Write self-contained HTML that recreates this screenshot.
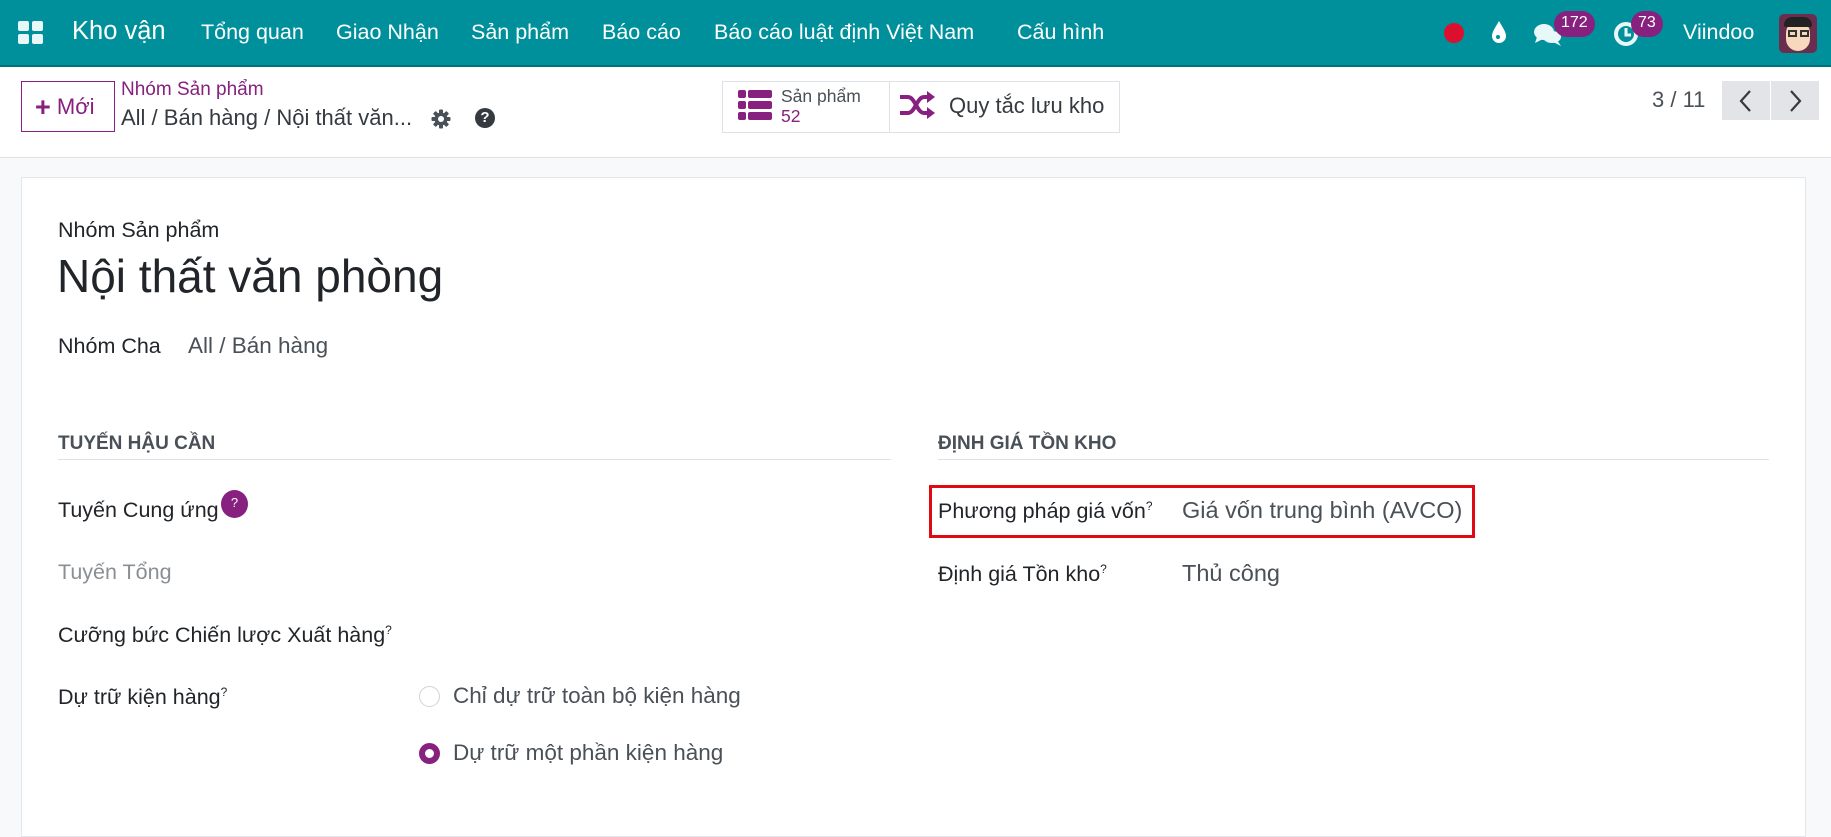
<!DOCTYPE html>
<html><head><meta charset="utf-8"><style>
*{margin:0;padding:0;box-sizing:border-box}
body{width:1831px;height:820px;overflow:hidden;background:#f8f9fa;font-family:"Liberation Sans","Noto Sans CJK SC",sans-serif;color:#212529;position:relative}
.a{position:absolute;white-space:nowrap;line-height:1}
.nav{position:absolute;left:0;top:0;width:1831px;height:67px;background:#00909b;border-bottom:2px solid #00707a}
.nav .a{color:#fff;font-size:21.5px;top:22px}
.cp{position:absolute;left:0;top:67px;width:1831px;height:91px;background:#fff;border-bottom:1px solid #dee2e6}
.card{position:absolute;left:21px;top:177px;width:1785px;height:660px;background:#fff;border:1px solid #e3e6ea}
.lbl{font-size:21.5px;color:#212529}
.val{font-size:22.5px;color:#495057}
.hd{font-size:19px;font-weight:bold;color:#495057}
sup{font-size:12px}
</style></head><body>
<div class="nav">
  <svg class="a" style="left:18px;top:21px" width="26" height="24" viewBox="0 0 26 24"><rect x="0" y="0" width="11" height="10" rx="2" fill="#e8f7f8"/><rect x="14" y="0" width="11" height="10" rx="2" fill="#e8f7f8"/><rect x="0" y="13" width="11" height="10" rx="2" fill="#e8f7f8"/><rect x="14" y="13" width="11" height="10" rx="2" fill="#e8f7f8"/></svg>
  <div class="a" style="left:72px;top:19px;font-size:25.5px">Kho vận</div>
  <div class="a" style="left:201px">Tổng quan</div>
  <div class="a" style="left:336px">Giao Nhận</div>
  <div class="a" style="left:471px">Sản phẩm</div>
  <div class="a" style="left:602px">Báo cáo</div>
  <div class="a" style="left:714px">Báo cáo luật định Việt Nam</div>
  <div class="a" style="left:1017px">Cấu hình</div>
  <div class="a" style="left:1444px;top:23px;width:20px;height:20px;border-radius:50%;background:#dc0f2e"></div>
  <svg class="a" style="left:1490px;top:20px" width="18" height="24" viewBox="0 0 18 24"><path d="M9 1 C13 8 16 12 16 16 A7 7 0 0 1 2 16 C2 12 5 8 9 1Z" fill="#fff"/><circle cx="8" cy="17" r="2" fill="#00909b"/></svg>
  <svg class="a" style="left:1533px;top:22px" width="30" height="26" viewBox="0 0 30 26"><ellipse cx="11" cy="10" rx="10" ry="8" fill="#e8f7f8"/><path d="M4 15 L2 21 L10 17Z" fill="#e8f7f8"/><ellipse cx="19" cy="15" rx="9" ry="6" fill="#e8f7f8"/><path d="M24 18 L28 24 L20 20Z" fill="#e8f7f8"/></svg>
  <div class="a" style="left:1554px;top:11px;height:26px;padding:4px 7px;border-radius:13px;background:#87207f;font-size:16px">172</div>
  <svg class="a" style="left:1613px;top:20px" width="28" height="28" viewBox="0 0 28 28"><circle cx="13" cy="14" r="10" fill="none" stroke="#e8f7f8" stroke-width="4"/><path d="M13 8 V15 H18" stroke="#e8f7f8" stroke-width="3" fill="none"/></svg>
  <div class="a" style="left:1631px;top:11px;height:26px;padding:4px 7px;border-radius:13px;background:#87207f;font-size:16px">73</div>
  <div class="a" style="left:1683px">Viindoo</div>
  <div class="a" style="left:1779px;top:14px;width:38px;height:39px;border-radius:5px;background:#6b2d4e;overflow:hidden"><div style="position:absolute;left:7px;top:7px;width:24px;height:30px;border-radius:12px;background:#f7d8bd"></div><div style="position:absolute;left:5px;top:3px;width:28px;height:10px;border-radius:8px 8px 2px 2px;background:#222"></div><div style="position:absolute;left:9px;top:16px;width:9px;height:7px;border:2px solid #333"></div><div style="position:absolute;left:21px;top:16px;width:9px;height:7px;border:2px solid #333"></div></div>
</div>
<div class="cp">
  <div class="a" style="left:21px;top:14px;width:94px;height:51px;border:1px solid #87207f;color:#87207f;font-size:22px;line-height:49px;padding-left:13px"><b style="font-size:27px;vertical-align:-2px">+</b> Mới</div>
  <div class="a" style="left:121px;top:13px;font-size:19px;color:#87207f">Nhóm Sản phẩm</div>
  <div class="a" style="left:121px;top:40px;font-size:22px;color:#343a40">All / Bán hàng / Nội thất văn...</div>
  <svg class="a" style="left:431px;top:42px" width="20" height="20" viewBox="0 0 20 20"><g fill="#495057"><circle cx="10" cy="10" r="6.5"/><rect x="8" y="0.5" width="4" height="19" rx="1"/><rect x="0.5" y="8" width="19" height="4" rx="1"/><rect x="8" y="0.5" width="4" height="19" rx="1" transform="rotate(45 10 10)"/><rect x="8" y="0.5" width="4" height="19" rx="1" transform="rotate(-45 10 10)"/></g><circle cx="10" cy="10" r="3" fill="#fff"/></svg>
  <div class="a" style="left:475px;top:41px;width:20px;height:20px;border-radius:50%;background:#343a40;color:#fff;font-size:15px;font-weight:bold;text-align:center;line-height:20px">?</div>
  <div class="a" style="left:722px;top:14px;width:398px;height:52px;border:1px solid #dee2e6"></div>
  <div class="a" style="left:889px;top:14px;width:1px;height:52px;background:#dee2e6"></div>
  <svg class="a" style="left:738px;top:22px" width="35" height="33" viewBox="0 0 35 33"><g fill="#87207f"><rect x="0" y="1" width="8" height="8" rx="2"/><rect x="10" y="1" width="24" height="8" rx="2"/><rect x="0" y="12" width="8" height="8" rx="2"/><rect x="10" y="12" width="24" height="8" rx="2"/><rect x="0" y="23" width="8" height="8" rx="2"/><rect x="10" y="23" width="24" height="8" rx="2"/></g></svg>
  <div class="a" style="left:781px;top:21px;font-size:17.5px;color:#495057">Sản phẩm</div>
  <div class="a" style="left:781px;top:41px;font-size:17.5px;color:#87207f">52</div>
  <svg class="a" style="left:899px;top:24px" width="36" height="28" viewBox="0 0 36 28"><g fill="none" stroke="#87207f" stroke-width="4"><path d="M1 6 H9 C16 6 18 22 25 22 H30"/><path d="M1 22 H9 C16 22 18 6 25 6 H30"/></g><path d="M28 0 L36 6 L28 12Z M28 16 L36 22 L28 28Z" fill="#87207f"/></svg>
  <div class="a" style="left:949px;top:28px;font-size:22px;color:#343a40">Quy tắc lưu kho</div>
  <div class="a" style="left:1652px;top:22px;font-size:22px;color:#495057">3 / 11</div>
  <div class="a" style="left:1722px;top:14px;width:48px;height:39px;background:#e2e4e8"></div>
  <div class="a" style="left:1771px;top:14px;width:48px;height:39px;background:#e2e4e8"></div>
  <svg class="a" style="left:1738px;top:22px" width="14" height="24" viewBox="0 0 14 24"><path d="M12 2 L3 12 L12 22" fill="none" stroke="#343a40" stroke-width="2.2"/></svg>
  <svg class="a" style="left:1789px;top:22px" width="14" height="24" viewBox="0 0 14 24"><path d="M2 2 L11 12 L2 22" fill="none" stroke="#343a40" stroke-width="2.2"/></svg>
</div>
<div class="card"></div>
<div class="a lbl" style="left:58px;top:220px">Nhóm Sản phẩm</div>
<div class="a" style="left:57px;top:253px;font-size:46px;color:#212529">Nội thất văn phòng</div>
<div class="a lbl" style="left:58px;top:336px">Nhóm Cha</div>
<div class="a val" style="left:188px;top:335px">All / Bán hàng</div>
<div class="a hd" style="left:58px;top:434px">TUYẾN HẬU CẦN</div>
<div class="a" style="left:58px;top:459px;width:833px;height:1px;background:#dee2e6"></div>
<div class="a hd" style="left:938px;top:434px">ĐỊNH GIÁ TỒN KHO</div>
<div class="a" style="left:938px;top:459px;width:831px;height:1px;background:#dee2e6"></div>
<div class="a lbl" style="left:58px;top:500px">Tuyến Cung ứng</div>
<div class="a" style="left:221px;top:490px;width:27px;height:28px;border-radius:50%;background:#87207f;color:#fff;font-size:13px;text-align:center;line-height:26px">?</div>
<div class="a val" style="left:58px;top:562px;color:#8a8f95;font-size:21.5px">Tuyến Tổng</div>
<div class="a lbl" style="left:58px;top:624px">Cưỡng bức Chiến lược Xuất hàng<sup>?</sup></div>
<div class="a lbl" style="left:58px;top:686px">Dự trữ kiện hàng<sup>?</sup></div>
<div class="a" style="left:419px;top:686px;width:21px;height:21px;border-radius:50%;border:1px solid #ced4da;background:#fff"></div>
<div class="a val" style="left:453px;top:685px">Chỉ dự trữ toàn bộ kiện hàng</div>
<div class="a" style="left:419px;top:743px;width:21px;height:21px;border-radius:50%;border:6px solid #87207f;background:#fff"></div>
<div class="a val" style="left:453px;top:742px">Dự trữ một phần kiện hàng</div>
<div class="a" style="left:929px;top:485px;width:546px;height:53px;border:3px solid #e00a14"></div>
<div class="a lbl" style="left:938px;top:500px">Phương pháp giá vốn<sup>?</sup></div>
<div class="a val" style="left:1182px;top:499px;font-size:23.5px">Giá vốn trung bình (AVCO)</div>
<div class="a lbl" style="left:938px;top:563px">Định giá Tồn kho<sup>?</sup></div>
<div class="a val" style="left:1182px;top:562px;font-size:23.5px">Thủ công</div>
</body></html>
